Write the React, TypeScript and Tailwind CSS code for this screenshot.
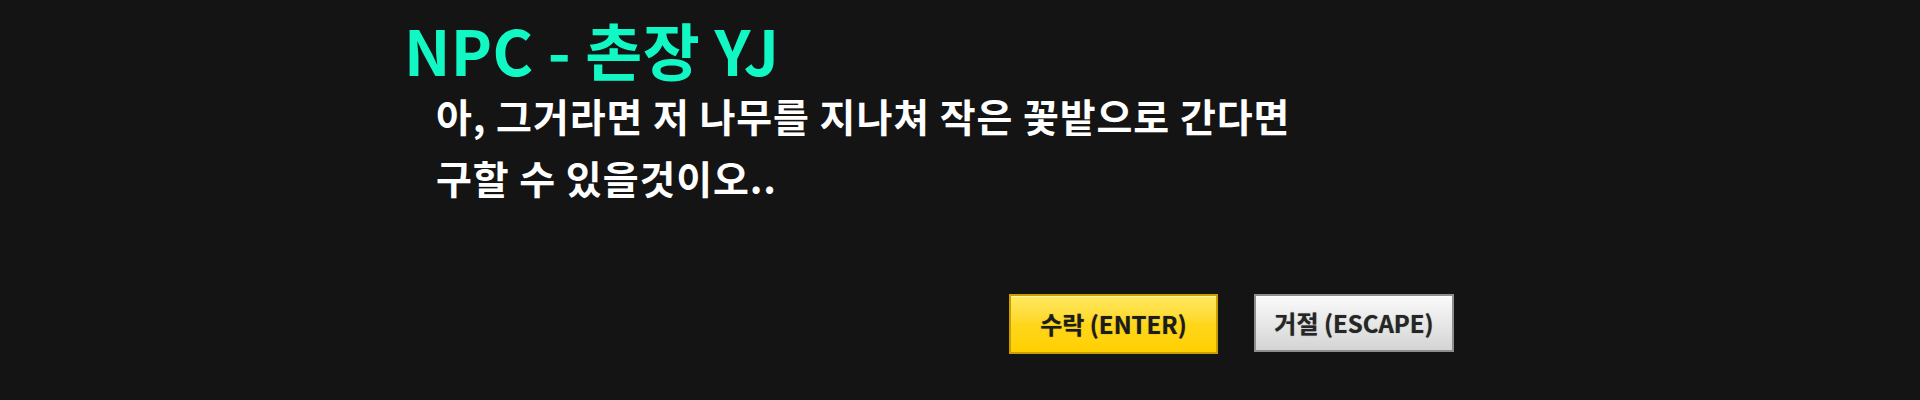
import React from 'react';

const lines = [
  '아, 그거라면 저 나무를 지나쳐 작은 꽃밭으로 간다면',
  '구할 수 있을것이오..',
];

export default function App() {
  const [answer, setAnswer] = React.useState<string | null>(null);

  return (
    <div className="w-full h-[400px] bg-[#141414] overflow-hidden font-['Noto_Sans_CJK_KR',sans-serif]">
      <div className="pl-[404px] pt-[18px]">
        <h1 className="text-[62px] leading-none font-bold text-[#12f8c4] tracking-[0.3px]">
          NPC - 촌장 YJ
        </h1>

        <div className="pl-[32px] mt-[4px]">
          {lines.map((line, i) => (
            <p key={i} className="text-[39px] leading-[62px] font-bold text-white tracking-[0.9px]">
              {line}
            </p>
          ))}
        </div>
      </div>

      <div className="flex items-start gap-[36px] pl-[1009px] mt-[86px]">
        <button
          onClick={() => setAnswer('accept')}
          className="w-[209px] h-[60px] border-2 border-[#c9a000] bg-gradient-to-b from-[#ffe95e] via-[#ffd71a] to-[#ffd000] text-[24px] font-bold text-[#1c1c1c] shadow-[inset_0_1px_0_rgba(255,255,255,0.5)] [text-shadow:0_0_1px_rgba(0,0,0,0.5)]"
        >
          수락 (ENTER)
        </button>
        <button
          onClick={() => setAnswer('reject')}
          className="w-[200px] h-[58px] border-2 border-[#8e8e8e] bg-gradient-to-b from-[#fafafa] via-[#e8e8e8] to-[#d4d4d4] text-[24px] font-bold text-[#262626] shadow-[inset_0_1px_0_rgba(255,255,255,0.8)] [text-shadow:0_0_1px_rgba(0,0,0,0.5)]"
        >
          거절 (ESCAPE)
        </button>
      </div>
      {answer && <span className="sr-only">{answer}</span>}
    </div>
  );
}
